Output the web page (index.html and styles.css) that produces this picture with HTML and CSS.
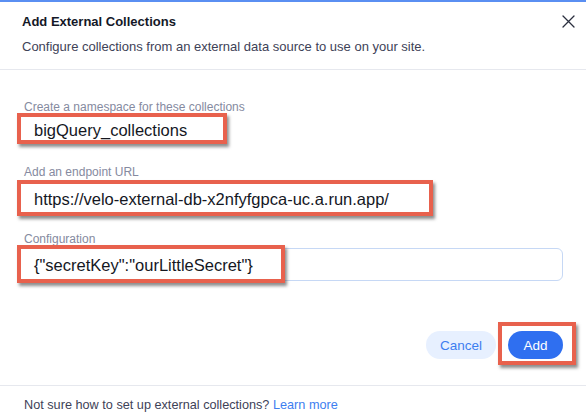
FILE: index.html
```html
<!DOCTYPE html>
<html lang="en">
<head>
<meta charset="utf-8">
<title>Add External Collections</title>
<link rel="stylesheet" href="styles.css">
</head>
<body>
<div class="dialog">
  <div class="topline"></div>
  <header class="header">
    <div class="heading">
      <h1 class="title">Add External Collections</h1>
      <p class="subtitle">Configure collections from an external data source to use on your site.</p>
    </div>
    <button class="close" aria-label="Close">
      <svg width="13" height="13" viewBox="0 0 13 13"><path d="M1 1L12 12M12 1L1 12" stroke="#2b2f3f" stroke-width="1.3" fill="none" stroke-linecap="round"/></svg>
    </button>
  </header>
  <main class="body">
    <label class="label">Create a namespace for these collections</label>
    <div class="hl-input hl-one">bigQuery_collections</div>

    <label class="label label-two">Add an endpoint URL</label>
    <div class="hl-input hl-two">https://velo-external-db-x2nfyfgpca-uc.a.run.app/</div>

    <label class="label label-three">Configuration</label>
    <div class="input">
      <div class="hl-overlay hl-three"></div>
      <span class="input-text">{"secretKey":"ourLittleSecret"}</span>
    </div>

    <div class="actions">
      <button class="btn btn-cancel">Cancel</button>
      <div class="btn-wrap">
        <div class="hl-overlay hl-add"></div>
        <button class="btn btn-add">Add</button>
      </div>
    </div>
  </main>
  <footer class="footer">
    Not sure how to set up external collections? <a class="link" href="#">Learn more</a>
  </footer>
</div>
</body>
</html>
```
FILE: styles.css
```css
html, body {
  margin: 0;
  padding: 0;
  background: #ffffff;
}
body {
  font-family: "Liberation Sans", Arial, Helvetica, sans-serif;
  width: 586px;
  height: 420px;
  overflow: hidden;
}
.dialog {
  width: 586px;
  height: 420px;
  display: flex;
  flex-direction: column;
  background: #fff;
}
.topline {
  height: 2px;
  background: #5a8ff2;
}
.header {
  display: flex;
  justify-content: space-between;
  align-items: flex-start;
  padding: 12px 11px 14px 22px;
  border-bottom: 1px solid #e6e8ee;
}
.title {
  margin: 0;
  font-size: 13px;
  line-height: 16px;
  font-weight: bold;
  color: #141827;
}
.subtitle {
  margin: 9px 0 0 0;
  font-size: 13px;
  line-height: 16px;
  color: #3e4257;
}
.close {
  border: 0;
  background: none;
  padding: 0;
  margin: 1px 0 0 0;
  width: 13px;
  height: 13px;
  display: block;
  cursor: pointer;
}
.close svg { display: block; }
.body {
  display: flex;
  flex-direction: column;
  align-items: flex-start;
  padding: 31px 0 26px 0;
}
.label {
  display: block;
  margin-left: 24px;
  font-size: 12px;
  line-height: 13px;
  color: #858aa0;
}
.label-two { margin-top: 22px; }
.label-three { margin-top: 17px; }
.hl-input {
  box-sizing: border-box;
  margin-left: 17px;
  border: 4px solid #e8614d;
  box-shadow: 2px 3px 3px rgba(50, 50, 50, 0.55);
  background: #fff;
  display: flex;
  align-items: center;
  padding: 3px 0 0 13px;
  font-size: 16.5px;
  color: #15171f;
  white-space: nowrap;
}
.hl-one { width: 210px; height: 31px; margin-top: -1px; }
.hl-two { width: 416px; height: 36px; margin-top: 1px; }
.input {
  position: relative;
  box-sizing: border-box;
  margin: 2px 0 0 22px;
  width: 541px;
  height: 33px;
  border: 1px solid #c6d8f5;
  border-radius: 6px;
  display: flex;
  align-items: center;
  padding: 2px 0 0 11px;
}
.input-text {
  position: relative;
  font-size: 16.5px;
  color: #15171f;
  white-space: nowrap;
}
.hl-overlay {
  position: absolute;
  box-sizing: border-box;
  border: 4px solid #e8614d;
  box-shadow: 2px 3px 3px rgba(50, 50, 50, 0.55);
  background: #fff;
}
.hl-three {
  left: -6px;
  top: -4px;
  width: 268px;
  height: 38px;
}
.actions {
  align-self: stretch;
  display: flex;
  justify-content: flex-end;
  align-items: center;
  gap: 12px;
  margin-top: 50px;
  padding-right: 23px;
}
.btn-wrap {
  position: relative;
  display: flex;
}
.btn {
  position: relative;
  border: 0;
  height: 28px;
  border-radius: 14px;
  font-family: "Liberation Sans", Arial, Helvetica, sans-serif;
  font-size: 13.5px;
  padding: 0;
  cursor: pointer;
}
.btn-cancel {
  width: 70px;
  background: #e7f0ff;
  color: #3d7ef0;
}
.btn-add {
  width: 55px;
  background: #2f6ff0;
  color: #ffffff;
}
.hl-add {
  left: -10px;
  top: -9px;
  width: 78px;
  height: 43px;
}
.footer {
  border-top: 1px solid #e6e8ee;
  padding: 11px 0 0 24px;
  font-size: 12.7px;
  line-height: 16px;
  color: #3e4257;
}
.link {
  color: #3d7ef0;
  text-decoration: none;
}
```
